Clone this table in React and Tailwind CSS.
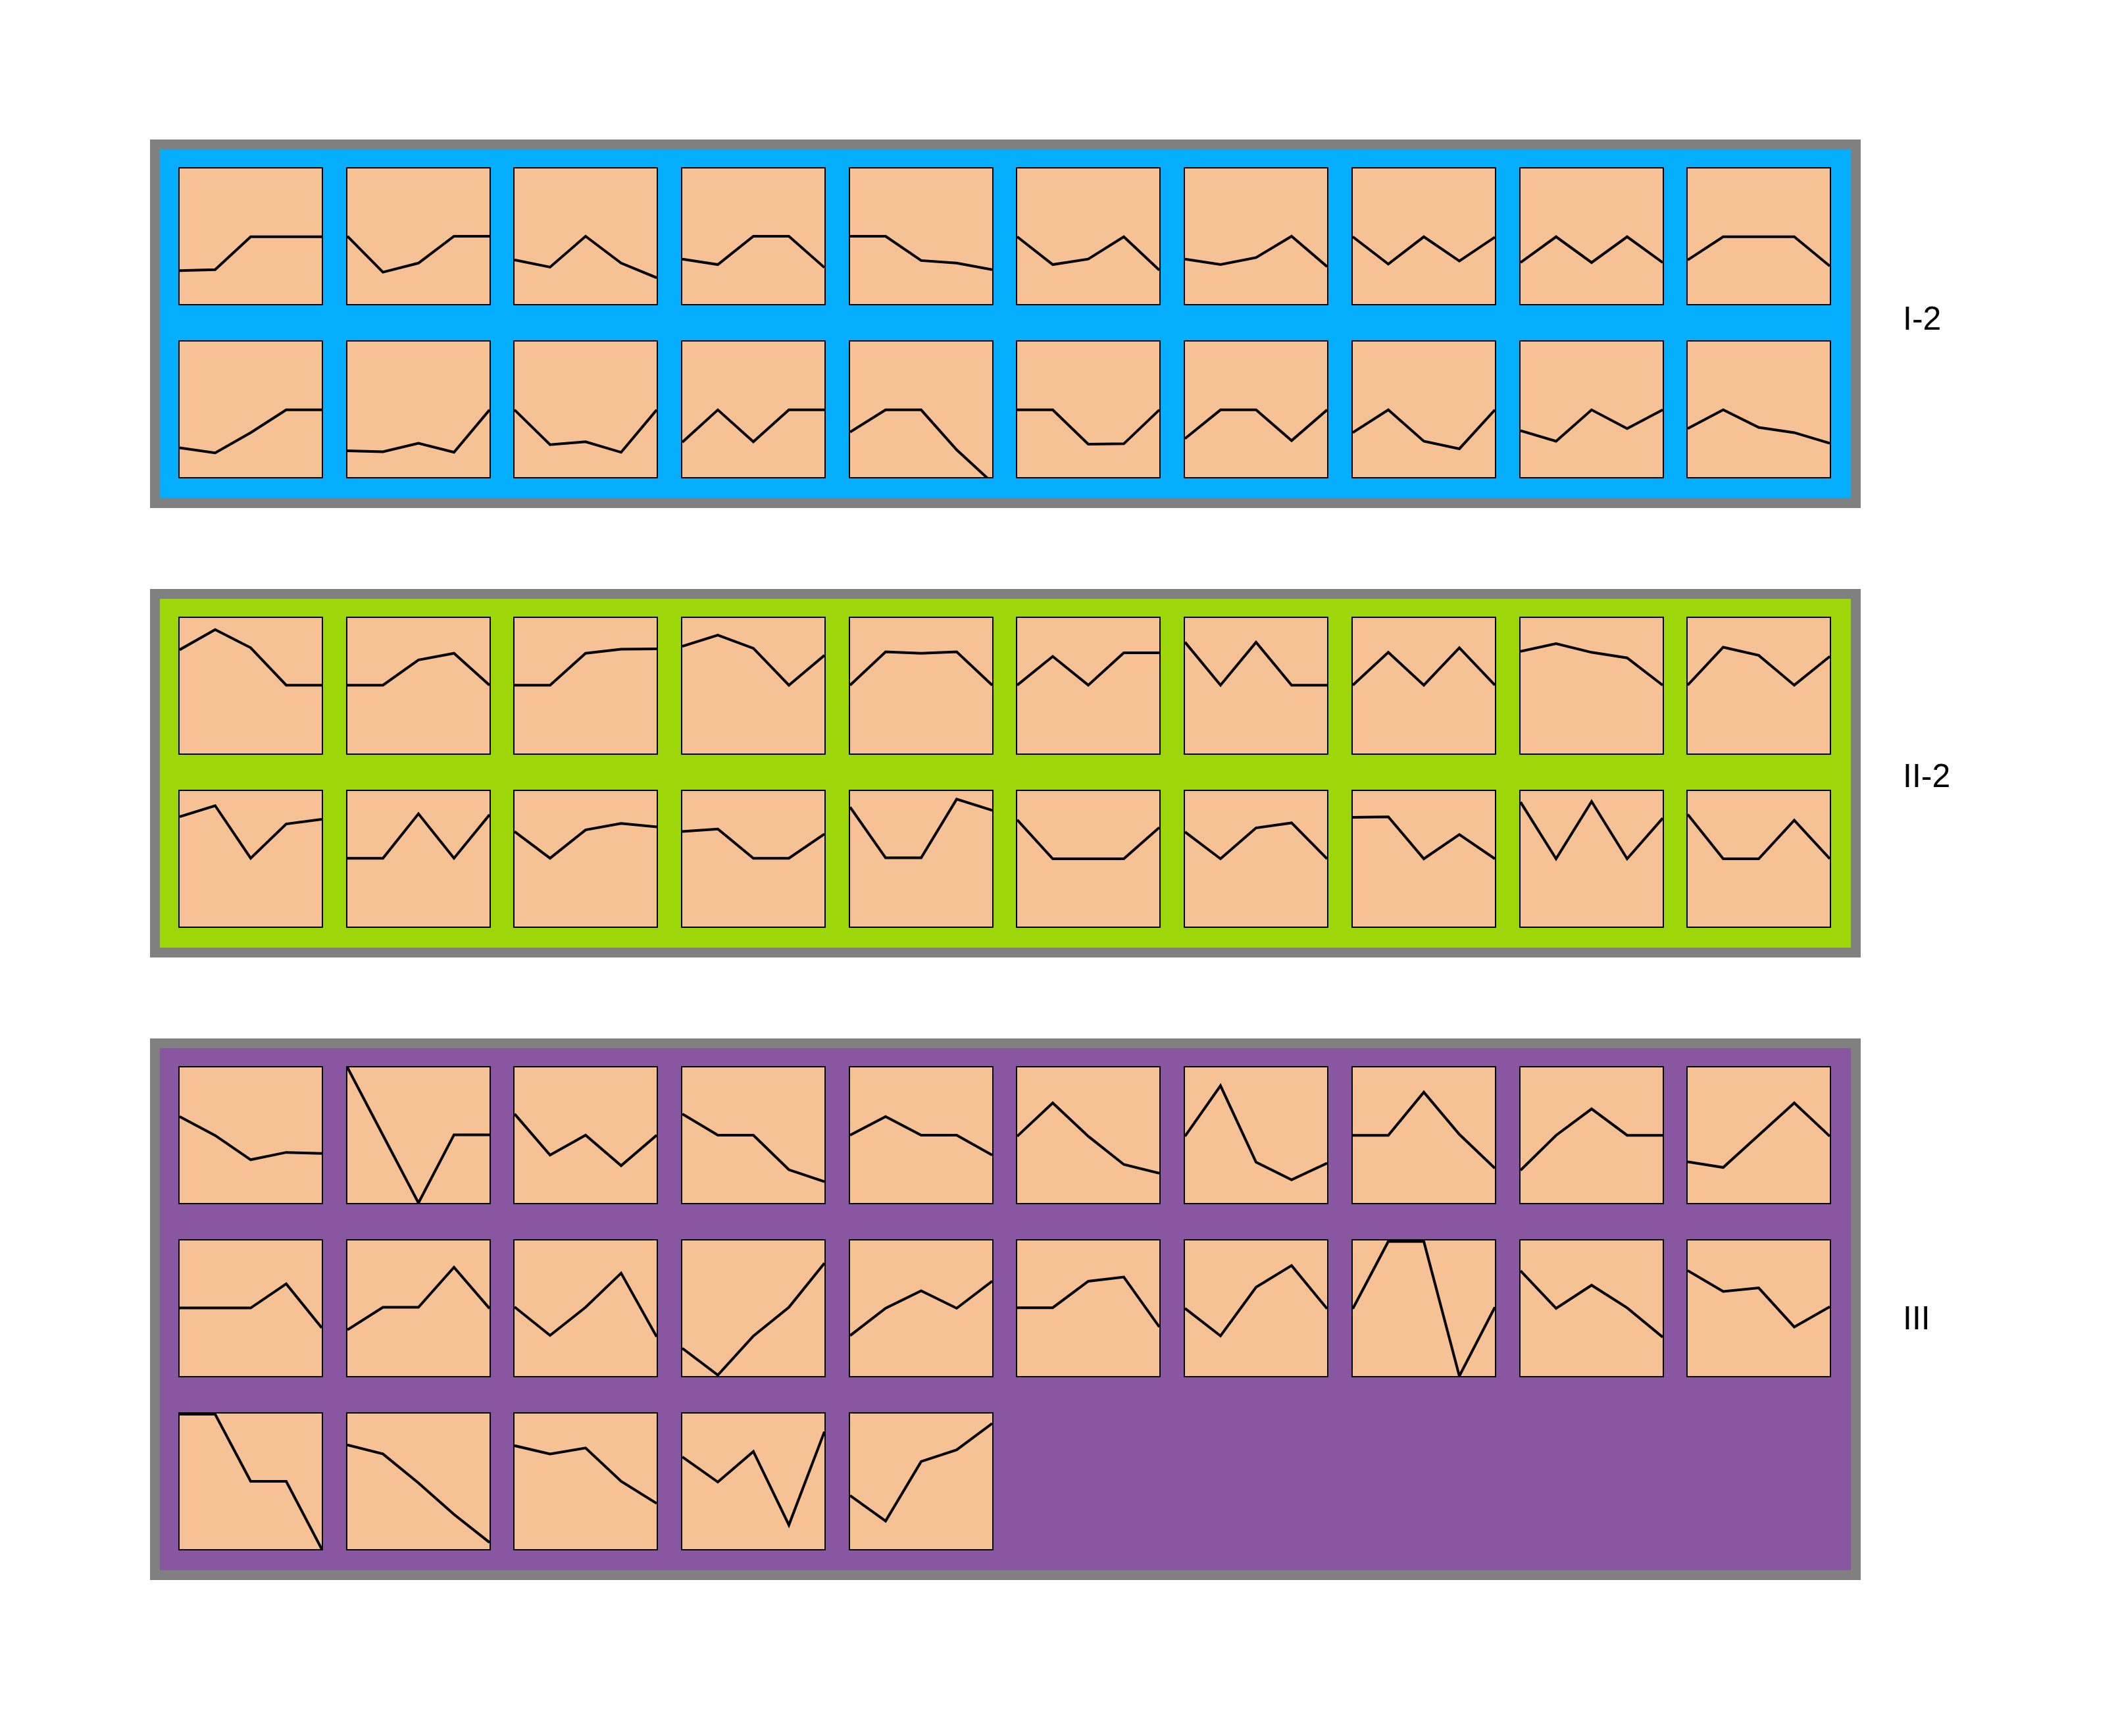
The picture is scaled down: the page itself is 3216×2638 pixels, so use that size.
const PANELS = [
    {
        label: 'I-2',
        bg: 'bg-[#05aeff]',
        labelPad: 'pt-[247px]',
        series: [
            [0.754, 0.746, 0.504, 0.504, 0.504],
            [0.5, 0.765, 0.698, 0.5, 0.5],
            [0.675, 0.728, 0.5, 0.698, 0.806],
            [0.668, 0.709, 0.5, 0.5, 0.731],
            [0.5, 0.5, 0.679, 0.698, 0.746],
            [0.504, 0.709, 0.668, 0.504, 0.75],
            [0.668, 0.709, 0.657, 0.5, 0.724],
            [0.504, 0.705, 0.504, 0.683, 0.507],
            [0.694, 0.504, 0.694, 0.504, 0.694],
            [0.675, 0.504, 0.504, 0.504, 0.72],
            [0.784, 0.821, 0.672, 0.504, 0.504],
            [0.806, 0.813, 0.75, 0.817, 0.504],
            [0.504, 0.761, 0.739, 0.817, 0.504],
            [0.743, 0.504, 0.739, 0.504, 0.504],
            [0.668, 0.504, 0.504, 0.799, 1.04],
            [0.504, 0.504, 0.757, 0.754, 0.504],
            [0.716, 0.504, 0.504, 0.731, 0.504],
            [0.672, 0.504, 0.735, 0.791, 0.504],
            [0.657, 0.735, 0.504, 0.642, 0.504],
            [0.642, 0.504, 0.634, 0.672, 0.75],
        ],
    },
    {
        label: 'II-2',
        bg: 'bg-[#9dd70a]',
        labelPad: 'pt-[259px]',
        series: [
            [0.235, 0.086, 0.22, 0.496, 0.496],
            [0.496, 0.496, 0.31, 0.261, 0.496],
            [0.496, 0.496, 0.261, 0.231, 0.228],
            [0.209, 0.127, 0.224, 0.496, 0.276],
            [0.496, 0.25, 0.261, 0.25, 0.496],
            [0.496, 0.284, 0.496, 0.257, 0.257],
            [0.179, 0.496, 0.179, 0.496, 0.496],
            [0.496, 0.254, 0.496, 0.22, 0.496],
            [0.246, 0.19, 0.254, 0.295, 0.496],
            [0.496, 0.216, 0.276, 0.496, 0.284],
            [0.19, 0.108, 0.496, 0.243, 0.209],
            [0.496, 0.496, 0.168, 0.496, 0.175],
            [0.299, 0.496, 0.287, 0.239, 0.265],
            [0.299, 0.28, 0.496, 0.496, 0.317],
            [0.119, 0.493, 0.493, 0.06, 0.142],
            [0.213, 0.5, 0.5, 0.5, 0.269],
            [0.302, 0.5, 0.272, 0.235, 0.5],
            [0.194, 0.19, 0.5, 0.321, 0.5],
            [0.082, 0.5, 0.078, 0.5, 0.201],
            [0.172, 0.5, 0.5, 0.216, 0.5],
        ],
    },
    {
        label: 'III',
        bg: 'bg-[#8957a1]',
        labelPad: 'pt-[400px]',
        series: [
            [0.363, 0.502, 0.681, 0.627, 0.635],
            [0, 0.5, 1.0, 0.497, 0.497],
            [0.343, 0.647, 0.5, 0.725, 0.5],
            [0.343, 0.5, 0.5, 0.755, 0.843],
            [0.5, 0.363, 0.5, 0.5, 0.647],
            [0.508, 0.262, 0.508, 0.716, 0.781],
            [0.508, 0.135, 0.699, 0.829, 0.706],
            [0.501, 0.501, 0.183, 0.494, 0.744],
            [0.759, 0.501, 0.306, 0.501, 0.501],
            [0.697, 0.738, 0.5, 0.262, 0.508],
            [0.498, 0.498, 0.498, 0.32, 0.644],
            [0.659, 0.493, 0.493, 0.198, 0.502],
            [0.49, 0.7, 0.493, 0.241, 0.71],
            [0.795, 0.993, 0.705, 0.493, 0.168],
            [0.702, 0.5, 0.371, 0.5, 0.3],
            [0.496, 0.496, 0.301, 0.27, 0.638],
            [0.501, 0.704, 0.345, 0.185, 0.504],
            [0.504, 0.007, 0.007, 1.0, 0.492],
            [0.224, 0.501, 0.33, 0.497, 0.713],
            [0.222, 0.376, 0.35, 0.638, 0.489],
            [0.005, 0.005, 0.5, 0.5, 1.0],
            [0.232, 0.298, 0.512, 0.744, 0.951],
            [0.237, 0.298, 0.254, 0.5, 0.663],
            [0.32, 0.505, 0.28, 0.822, 0.134],
            [0.605, 0.793, 0.354, 0.268, 0.073],
        ],
    },
];

const W = 216;
const H = 206;

function Spark({ values }) {
    const pts = values.map((v, i) => `${(i * W) / 4},${v * H}`).join(' ');
    return (
        <div className="h-[210px] w-[220px] border-2 border-black bg-[#f7c196]">
            <svg className="block h-full w-full" viewBox={`0 0 ${W} ${H}`} preserveAspectRatio="none">
                <polyline points={pts} fill="none" stroke="#000" strokeWidth="4" strokeLinejoin="miter" />
            </svg>
        </div>
    );
}

function Panel({ p }) {
    return (
        <div className="flex items-start">
            <div className={`w-[2600px] border-[15px] border-[#808080] ${p.bg} pt-[27px] pr-[30px] pb-[30px] pl-[28px]`}>
                <div className="grid grid-cols-[repeat(10,220px)] gap-x-[34.7px] gap-y-[53px]">
                    {p.series.map((s, i) => (
                        <Spark key={i} values={s} />
                    ))}
                </div>
            </div>
            <div className={`ml-[64px] ${p.labelPad} text-[50px] leading-none text-black`}>{p.label}</div>
        </div>
    );
}

export default function App() {
    return (
        <div className="h-[2638px] w-[3216px] bg-white pt-[212px] pl-[228px] font-['Liberation_Sans',Arial,sans-serif]">
            <div className="flex flex-col gap-[123px]">
                {PANELS.map((p) => (
                    <Panel key={p.label} p={p} />
                ))}
            </div>
        </div>
    );
}
